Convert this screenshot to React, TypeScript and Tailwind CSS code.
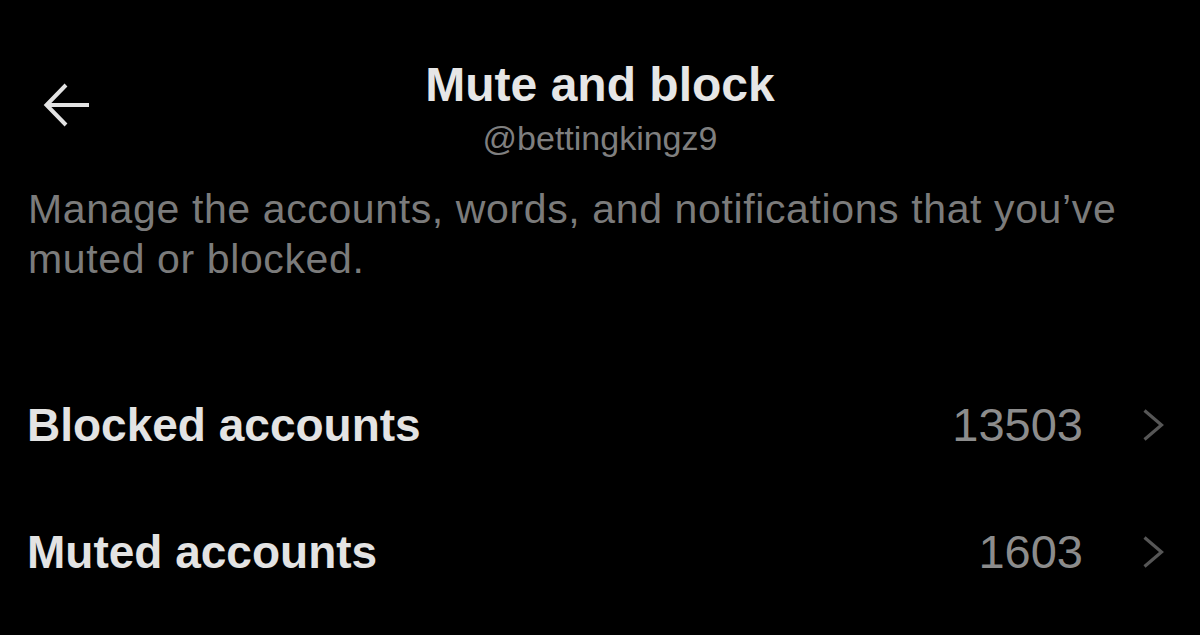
import React from "react";

const font = { fontFamily: '"Liberation Sans", Arial, sans-serif' };

function Chevron() {
  return (
    <svg width="22" height="34" viewBox="0 0 22 34" fill="none" className="shrink-0">
      <path d="M2.5 2.5 L19.5 17 L2.5 31.5" stroke="#565656" strokeWidth="3.2" strokeLinecap="butt" strokeLinejoin="miter" />
    </svg>
  );
}

function Row({ label, value }: { label: string; value: string }) {
  return (
    <div className="flex h-[127px] items-center pl-[27px] pr-[36px]">
      <div className="flex-1 text-[46px] font-bold leading-[64px] text-[#e3e3e3]">{label}</div>
      <div className="text-[47px] leading-[64px] text-[#8c8c8c]">{value}</div>
      <div className="ml-[59px] flex items-center">
        <Chevron />
      </div>
    </div>
  );
}

export default function App() {
  return (
    <div className="h-[635px] w-full overflow-hidden bg-black pt-[57px]" style={font}>
      <div className="grid grid-cols-[1fr_auto_1fr]">
        <div className="pl-[42px] pt-[24px]">
          <svg width="48" height="48" viewBox="0 0 48 48" fill="none">
            <path d="M47 24 H4.5 M24 4 L4.5 24 L24 44" stroke="#e3e3e3" strokeWidth="4" strokeLinejoin="miter" />
          </svg>
        </div>
        <div className="flex flex-col items-center">
          <div className="text-[48px] font-bold leading-[56px] text-[#e6e6e6]">Mute and block</div>
          <div className="mt-[5px] text-[34px] leading-[40px] text-[#7f7f7f]">@bettingkingz9</div>
        </div>
        <div />
      </div>
      <p className="mt-[26px] pl-[28px] pr-[60px] text-[41px] leading-[50px] tracking-[0.62px] text-[#7b7b7b]">
        Manage the accounts, words, and notifications that you’ve muted or blocked.
      </p>
      <div className="mt-[77px]">
        <Row label="Blocked accounts" value="13503" />
        <Row label="Muted accounts" value="1603" />
      </div>
    </div>
  );
}
